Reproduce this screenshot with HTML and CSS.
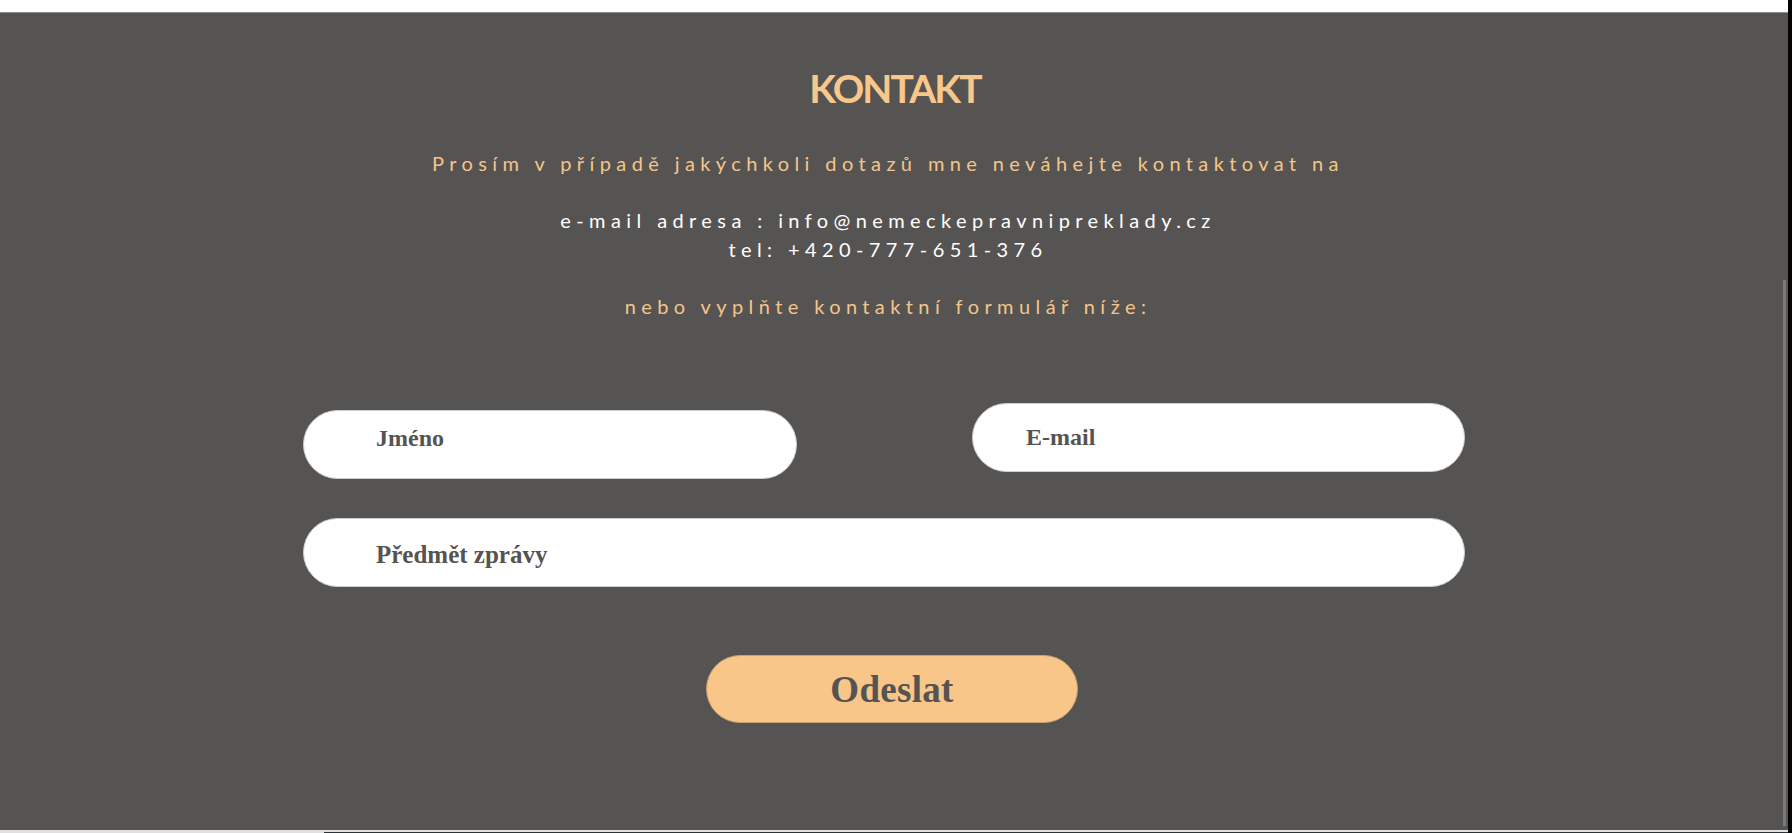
FILE: index.html
```html
<!DOCTYPE html>
<html lang="cs">
<head>
<meta charset="utf-8">
<title>Kontakt</title>
<link rel="stylesheet" href="styles.css">
</head>
<body>
<div class="frame">
  <div class="main">
    <div class="topstrip"></div>
    <section class="contact">
      <h1 class="title">KONTAKT</h1>
      <p class="intro">
        <span class="peach">Prosím v případě jakýchkoli dotazů mne neváhejte kontaktovat na</span><br><br>
        <span class="white">e-mail adresa : info@nemeckepravnipreklady.cz</span><br>
        <span class="white">tel: +420-777-651-376</span><br><br>
        <span class="peach">nebo vyplňte kontaktní formulář níže:</span>
      </p>
      <form class="form">
        <input class="field field-name" type="text" placeholder="Jméno">
        <input class="field field-mail" type="email" placeholder="E-mail">
        <input class="field field-subject" type="text" placeholder="Předmět zprávy">
      </form>
      <button class="send" type="button">Odeslat</button>
      <div class="scrolltrack"></div>
    </section>
    <div class="bottomline"><div class="bottomdark"></div></div>
  </div>
  <div class="edge"></div>
</div>
</body>
</html>
```
FILE: styles.css
```css
* { box-sizing: border-box; }
html, body { margin: 0; padding: 0; }
body {
  background: #ffffff;
  font-family: Lato, "Open Sans", sans-serif;
  overflow: hidden;
}
.frame {
  display: flex;
  height: 833px;
}
.main {
  flex: 1;
  display: flex;
  flex-direction: column;
}
.edge {
  width: 4px;
  background: #050505;
}
.topstrip {
  height: 12px;
  background: #ffffff;
}
.contact {
  position: relative;
  height: 818px;
  background: #555452;
  border-top: 1px solid #8e8e8e;
  padding-top: 50px;
}
.title {
  margin: 0;
  padding-left: 2px;
  text-align: center;
  font-family: Lato, sans-serif;
  font-weight: 700;
  font-size: 39px;
  line-height: 50px;
  color: #f8c78b;
  letter-spacing: -1.9px;
}
.intro {
  margin: 36px 0 0;
  padding-right: 12px;
  text-align: center;
  font-size: 20px;
  line-height: 28.5px;
  letter-spacing: 5.4px;
}
.peach { color: #f6c48a; }
.white { color: #ffffff; }
.form {
  width: 1162px;
  margin: 83px 0 0 calc(50% - 591px);
  display: grid;
  grid-template-columns: 494px 493px;
  column-gap: 175px;
  row-gap: 39px;
  align-items: start;
}
.field {
  display: block;
  height: 69px;
  border: 1px solid #cfcfcf;
  border-radius: 35px;
  background: #ffffff;
  font-family: "Liberation Serif", serif;
  font-weight: 700;
  font-size: 24px;
  color: #555452;
  outline: none;
  padding: 0 20px 0 72px;
}
.field::placeholder {
  color: #555452;
  opacity: 1;
}
.field-name {
  margin-top: 7px;
  width: 494px;
  padding-bottom: 12px;
}
.field-mail { width: 493px; padding-left: 53px; }
.field-subject {
  grid-column: 1 / 3;
  width: 1162px;
  padding-top: 4px;
  font-size: 25px;
}
.send {
  display: block;
  margin: 68px 0 0 calc(50% - 188px);
  width: 372px;
  height: 68px;
  border: 1px solid #c9a06e;
  border-radius: 34px;
  background: #f8c689;
  font-family: "Liberation Serif", serif;
  font-weight: 700;
  font-size: 37px;
  letter-spacing: 0.3px;
  color: #555452;
  cursor: pointer;
}
.scrolltrack {
  position: absolute;
  right: 2px;
  top: 267px;
  bottom: 4px;
  width: 3px;
  background: #7b7a78;
}
.bottomline {
  height: 3px;
  background: #e0e0e0;
  display: flex;
  justify-content: flex-end;
}
.bottomdark {
  width: 1464px;
  height: 1px;
  margin-top: 2px;
  background: #2b3336;
}
```
